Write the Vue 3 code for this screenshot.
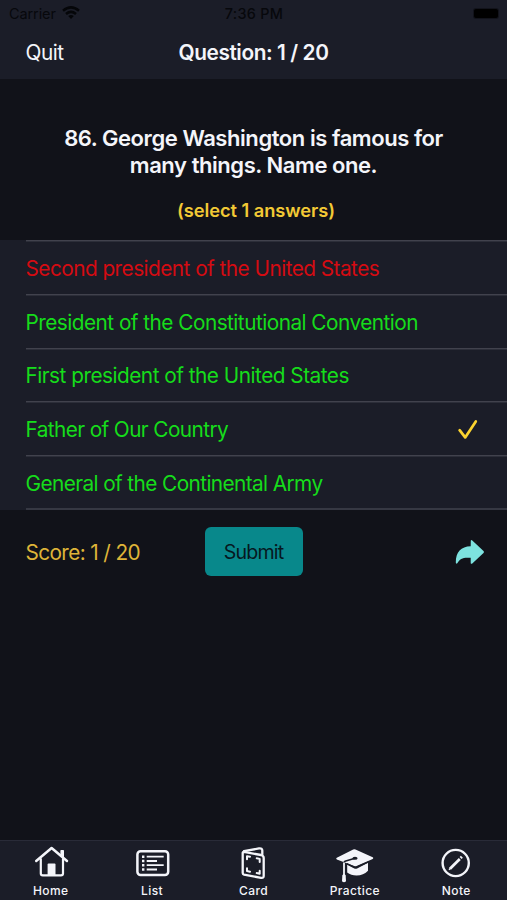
<script setup>
const answers = [
  { text: 'Second president of the United States', correct: false, w: 'a1' },
  { text: 'President of the Constitutional Convention', correct: true, w: 'a2' },
  { text: 'First president of the United States', correct: true, w: 'a3' },
  { text: 'Father of Our Country', correct: true, picked: true, w: 'a4' },
  { text: 'General of the Continental Army', correct: true, w: 'a5' },
]
</script>

<template>
  <div class="screen">
    <header class="top">
      <div class="status">
        <div class="carrier">
          <span>Carrier</span>
          <svg class="wifi" viewBox="0 0 18 13" width="18" height="13">
            <g fill="none" stroke="#050609" stroke-width="2.5">
              <path d="M1 4.8 Q9 -2 17 4.8" />
              <path d="M4 8 Q9 3.8 14 8" />
            </g>
            <path d="M6.2 10 Q9 7.8 11.8 10 L9 13 Z" fill="#050609" />
          </svg>
        </div>
        <span class="time">7:36 PM</span>
        <div class="battery"><i></i></div>
      </div>
      <div class="nav">
        <span class="quit">Quit</span>
        <span class="title">Question: 1 / 20</span>
        <span></span>
      </div>
    </header>

    <section class="question">
      <h1>86. George Washington is famous for<br />many things. Name one.</h1>
      <p>(select 1 answers)</p>
    </section>

    <ul class="answers">
      <li v-for="a in answers" :key="a.text">
        <span :class="[a.correct ? 'right' : 'wrong', a.w]">{{ a.text }}</span>
        <svg v-if="a.picked" class="check" viewBox="0 0 22 22" width="22" height="22">
          <path d="M2.6 11.2 L8.2 18.4 L18.8 2.4" fill="none" stroke="#fbd32f" stroke-width="2.7" stroke-linecap="round" stroke-linejoin="round" />
        </svg>
      </li>
    </ul>

    <section class="actions">
      <span class="score">Score: 1 / 20</span>
      <button type="button">Submit</button>
      <svg class="share" viewBox="0 0 30 26" width="30" height="26">
        <path d="M15.8 1.5 Q16.3 .6 17.3 1.5 L28.5 12 Q29.5 13 28.5 14 L17.3 24.5 Q15.9 25.4 15.7 24 V18.8 C8 18.2 5 19.5 2.3 24.2 Q1 25.4 .8 23.5 C.8 12.6 6 7.6 15.7 7.2 Z" fill="#7de2df" />
      </svg>
    </section>

    <nav class="tabs">
      <div class="tab">
        <svg viewBox="0 0 40 40" width="40" height="40" fill="none" stroke="#f4f5fa" stroke-width="2.2" stroke-linecap="round" stroke-linejoin="round">
          <path d="M5.2 17 L20.6 4 L36 17" stroke-width="2.5" />
          <path d="M9.8 15 V29.5 Q9.8 31.3 11.8 31.3 H30 Q32 31.3 32 29.5 V15" />
          <path d="M30.2 6.8 H32.2 V13.5 L30.2 11.5 Z" fill="#f4f5fa" stroke-width="1.6" />
          <path d="M16.6 31.5 V20.5 Q16.6 19.6 17.5 19.6 H23.6 Q24.5 19.6 24.5 20.5 V31.5 Z" fill="#f4f5fa" stroke="none" />
        </svg>
        <span>Home</span>
      </div>
      <div class="tab">
        <svg viewBox="0 0 40 40" width="40" height="40" fill="none" stroke="#f4f5fa" stroke-width="2.5">
          <rect x="5.4" y="7.2" width="30.8" height="23.8" rx="3.2" />
          <path d="M14.7 12.7 H31.7 M14.7 17 H25 M14.7 21.2 H31.7 M14.7 25.5 H25" stroke-width="1.8" />
          <path d="M10 12.7 H12.4 M10 17 H12.4 M10 21.2 H12.4 M10 25.5 H12.4" />
        </svg>
        <span>List</span>
      </div>
      <div class="tab">
        <svg viewBox="0 0 40 40" width="40" height="40" fill="none" stroke="#f4f5fa" stroke-width="2.3" stroke-linecap="round" stroke-linejoin="round">
          <path d="M11 7.9 L28 11 Q30.7 11.6 30.7 14 V32 Q30.7 34.4 28 33.8 L11 30.6 Q9.7 30.3 9.7 29 V9 Q9.7 7.6 11 7.9 Z" />
          <path d="M11 7.2 L26 4.4 Q29.3 3.9 29.3 6.5 V10.5" />
          <path d="M14 15.2 V12.2 L17 12.7 M23.7 14.2 L26.7 14.9 V17.9 M14 24.2 V27.1 L17 27.7 M23.7 29.1 L26.7 29.7 V26.8" stroke-width="2" />
        </svg>
        <span>Card</span>
      </div>
      <div class="tab">
        <svg viewBox="0 0 40 40" width="40" height="40" fill="#f4f5fa">
          <path d="M12.2 20.8 L19.3 24.4 Q20.7 25 22.1 24.4 L33 18.7 V26.7 Q28.5 31.5 21.5 31.5 Q16 31.5 12.2 28.5 Z" />
          <path d="M18.2 5.5 Q19.3 5 20.5 5.5 L37.7 13.3 Q39 14.1 37.7 14.9 L21.6 22 Q20.4 22.5 19.2 22 L1.8 15.4 Q.5 14.6 1.8 13.8 Z" />
          <path d="M11.8 19.6 L19.2 23.2 Q20.4 23.7 21.6 23.2 L33.5 17.8" fill="none" stroke="#1a1c27" stroke-width="1.3" />
          <path d="M20 14.3 L10 17.3 Q9 17.8 9 19" fill="none" stroke="#1a1c27" stroke-width="1.6" />
          <ellipse cx="20" cy="14.2" rx="2.6" ry="1.5" fill="#1a1c27" />
          <path d="M9 18.6 V31" fill="none" stroke="#f4f5fa" stroke-width="1.8" />
          <path d="M7.3 31.5 Q9 28.6 10.7 31.5 L11 37.3 Q9 39.3 7 37.3 Z" />
        </svg>
        <span>Practice</span>
      </div>
      <div class="tab">
        <svg viewBox="0 0 40 40" width="40" height="40" fill="none" stroke="#f4f5fa" stroke-width="2.4">
          <circle cx="19.7" cy="19" r="13.1" />
          <path d="M14 24.7 L23.8 14.9" stroke-width="2.8" />
          <path d="M24.6 14 L25.9 12.7" stroke-width="2.8" />
          <path d="M13 25.7 L14.5 24.2" stroke-width="1.6" />
        </svg>
        <span>Note</span>
      </div>
    </nav>
  </div>
</template>

<style>
body {
  background: #111219;
}
</style>

<style scoped>
.screen {
  width: 507px;
  height: 900px;
  display: flex;
  flex-direction: column;
  overflow: hidden;
  background: #111219;
  color: #f4f5fa;
  font-family: Inter, sans-serif;
  font-size: 20.8px;
  white-space: nowrap;
}
.top {
  height: 79px;
  flex: none;
  background: #1b1d28;
}
.status {
  height: 27px;
  display: grid;
  grid-template-columns: 1fr auto 1fr;
  align-items: center;
  padding: 0 8px 0 9px;
  color: #07080c;
  font-size: 14.5px;
}
.carrier {
  display: flex;
  align-items: center;
  gap: 6px;
}
.carrier span {
  letter-spacing: -0.1px;
}
.wifi {
  margin-top: -2px;
}
.time {
  font-weight: 500;
  font-size: 14.4px;
  letter-spacing: 0.3px;
}
.battery {
  justify-self: end;
  width: 26px;
  height: 11px;
  border-radius: 3px;
  background: #12131b;
  display: flex;
  padding: 1px;
  box-sizing: border-box;
}
.battery i {
  flex: 1;
  border-radius: 2px;
  background: #000;
}
.nav {
  height: 50px;
  display: grid;
  grid-template-columns: 1fr auto 1fr;
  align-items: center;
  padding: 0 25.5px;
}
.quit {
  letter-spacing: -0.5px;
}
.title {
  font-weight: 600;
  letter-spacing: -0.4px;
}
.question {
  height: 161px;
  flex: none;
  text-align: center;
}
.question h1 {
  margin: 46px 0 0;
  font-size: 22px;
  line-height: 26.5px;
  font-weight: 600;
  letter-spacing: -0.44px;
}
.question p {
  margin: 20px 0 0 5px;
  font-size: 18.3px;
  line-height: 24px;
  font-weight: 600;
  letter-spacing: -0.05px;
  color: #f2c935;
}
.answers {
  margin: 0;
  padding: 0 0 0 25.5px;
  list-style: none;
  height: 270px;
  flex: none;
  box-sizing: border-box;
  background: #1b1d28;
  display: grid;
  grid-template-rows: repeat(4, 53.8px) 54.8px;
}
.answers li {
  display: flex;
  align-items: center;
  justify-content: space-between;
  border-top: 1.5px solid #41424d;
  border-top-width: 1px;
  box-shadow: inset 0 1px 0 #2c2e39;
  padding: 2px 28px 0 0;
}
.answers li:last-child {
  border-bottom: 2px solid #363843;
}
.a1 {
  letter-spacing: -0.54px;
}
.a2 {
  letter-spacing: -0.53px;
}
.a3 {
  letter-spacing: -0.51px;
}
.a4,
.a5 {
  letter-spacing: -0.6px;
}
.right {
  color: #16dc1b;
}
.wrong {
  color: #d50b12;
}
.actions {
  display: grid;
  grid-template-columns: 1fr auto 1fr;
  align-items: center;
  height: 49px;
  flex: none;
  margin-top: 17px;
  padding: 0 22px 0 25.5px;
}
.score {
  padding-top: 1px;
  color: #dfb438;
  letter-spacing: -0.62px;
}
.actions button {
  width: 98px;
  height: 49px;
  margin: 0 3.5px 0 0;
  border: 0;
  border-radius: 6px;
  padding: 1px 0 0;
  background: #08888b;
  color: #06181f;
  font: inherit;
  font-size: 19.6px;
  letter-spacing: -0.8px;
}
.share {
  justify-self: end;
}
.tabs {
  margin-top: auto;
  height: 60px;
  box-sizing: border-box;
  border-top: 1px solid #292b38;
  background: #1b1d28;
  display: grid;
  grid-template-columns: repeat(5, 1fr);
}
.tab {
  display: flex;
  flex-direction: column;
  align-items: center;
  padding-top: 3px;
}
.tab span {
  margin-top: -1px;
  font-size: 12px;
  line-height: 15px;
  font-weight: 500;
  letter-spacing: 0.4px;
}
</style>
